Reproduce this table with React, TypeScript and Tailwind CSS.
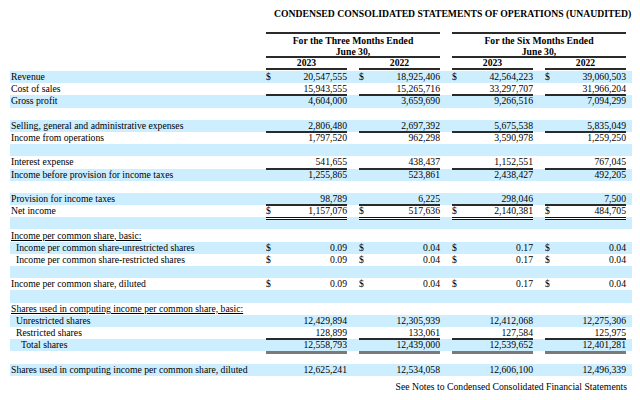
type Line = 'single' | 'double' | 'gray';

type Row = {
  label?: string;
  vals?: string[];
  dollar?: boolean;
  indent?: number;
  underline?: boolean;
  line?: Line;
};

const rows: Row[] = [
  { label: 'Revenue', vals: ['20,547,555', '18,925,406', '42,564,223', '39,060,503'], dollar: true },
  { label: 'Cost of sales', vals: ['15,943,555', '15,265,716', '33,297,707', '31,966,204'], line: 'single' },
  { label: 'Gross profit', vals: ['4,604,000', '3,659,690', '9,266,516', '7,094,299'] },
  {},
  { label: 'Selling, general and administrative expenses', vals: ['2,806,480', '2,697,392', '5,675,538', '5,835,049'], line: 'single' },
  { label: 'Income from operations', vals: ['1,797,520', '962,298', '3,590,978', '1,259,250'] },
  {},
  { label: 'Interest expense', vals: ['541,655', '438,437', '1,152,551', '767,045'], line: 'single' },
  { label: 'Income before provision for income taxes', vals: ['1,255,865', '523,861', '2,438,427', '492,205'] },
  {},
  { label: 'Provision for income taxes', vals: ['98,789', '6,225', '298,046', '7,500'], line: 'single' },
  { label: 'Net income', vals: ['1,157,076', '517,636', '2,140,381', '484,705'], dollar: true, line: 'double' },
  {},
  { label: 'Income per common share, basic:', underline: true },
  { label: 'Income per common share-unrestricted shares', vals: ['0.09', '0.04', '0.17', '0.04'], dollar: true, indent: 1 },
  { label: 'Income per common share-restricted shares', vals: ['0.09', '0.04', '0.17', '0.04'], dollar: true, indent: 1 },
  {},
  { label: 'Income per common share, diluted', vals: ['0.09', '0.04', '0.17', '0.04'], dollar: true },
  {},
  { label: 'Shares used in computing income per common share, basic:', underline: true },
  { label: 'Unrestricted shares', vals: ['12,429,894', '12,305,939', '12,412,068', '12,275,306'], indent: 1 },
  { label: 'Restricted shares', vals: ['128,899', '133,061', '127,584', '125,975'], indent: 1, line: 'single' },
  { label: 'Total shares', vals: ['12,558,793', '12,439,000', '12,539,652', '12,401,281'], indent: 2, line: 'gray' },
  {},
  { label: 'Shares used in computing income per common share, diluted', vals: ['12,625,241', '12,534,058', '12,606,100', '12,496,339'] },
];

// underlines drawn as shadows so they don't eat the row height
const lineClass: Record<Line, string> = {
  single: 'relative shadow-[inset_0_-1px_0_#2a2a2a,0_1px_0_#2a2a2a]',
  double: 'relative shadow-[0_1px_0_#111,0_2px_0_#fff,0_3px_0_#111]',
  gray: 'relative shadow-[0_3px_0_#7a7a7a]',
};

const indentClass = ['pl-[1px]', 'pl-[6px]', 'pl-[11px]'];

const DataRow = ({ row, shaded }: { row: Row; shaded: boolean }) => (
  <div className={`flex h-[12.2px] w-[622px] ml-[10px] ${shaded ? 'bg-[#cceeff]' : ''}`}>
    <div className={`w-[256px] flex items-center whitespace-nowrap ${indentClass[row.indent ?? 0]}`}>
      <span className={row.underline ? 'underline' : ''}>{row.label}</span>
    </div>
    {[0, 1, 2, 3].map((i) => (
      <div
        key={i}
        className={`w-[81px] h-full flex items-center justify-between ${i > 0 ? 'ml-[12px]' : ''} ${
          row.vals && row.line ? lineClass[row.line] : ''
        }`}
      >
        <span>{row.vals && row.dollar ? '$' : ''}</span>
        <span>{row.vals ? row.vals[i] : ''}</span>
      </div>
    ))}
  </div>
);

export default function App() {
  return (
    <div className="w-[640px] h-[400px] bg-white text-black text-[9.7px] leading-[12px] font-['Liberation_Serif',serif] overflow-hidden">
      <div className="pt-[8px] h-[32px] pl-[274px] font-bold whitespace-nowrap">
        CONDENSED CONSOLIDATED STATEMENTS OF OPERATIONS (UNAUDITED)
      </div>
      <div className="flex ml-[266px] font-bold">
        {['For the Three Months Ended', 'For the Six Months Ended'].map((t, i) => (
          <div
            key={t}
            className={`w-[174px] h-[26px] pt-[1px] border-t-2 border-b-2 border-[#2a2a2a] text-center leading-[11px] ${i > 0 ? 'ml-[12px]' : ''}`}
          >
            <div>{t}</div>
            <div>June 30,</div>
          </div>
        ))}
      </div>
      <div className="flex ml-[266px] font-bold">
        {['2023', '2022', '2023', '2022'].map((y, i) => (
          <div
            key={i}
            className={`w-[81px] h-[12px] border-b-2 border-[#2a2a2a] text-center leading-[10px] ${i > 0 ? 'ml-[12px]' : ''}`}
          >
            {y}
          </div>
        ))}
      </div>
      <div className="pt-[1px]">
        {rows.map((r, i) => (
          <DataRow key={i} row={r} shaded={i % 2 === 0} />
        ))}
      </div>
      <div className="mt-[5px] w-[627px] text-right whitespace-nowrap">
        See Notes to Condensed Consolidated Financial Statements
      </div>
    </div>
  );
}
